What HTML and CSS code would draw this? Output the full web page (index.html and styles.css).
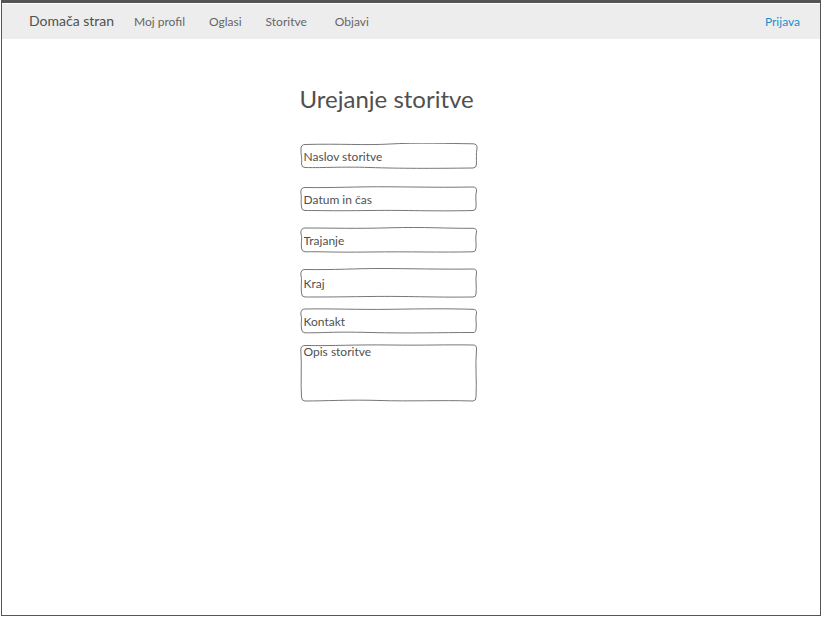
FILE: index.html
```html
<!DOCTYPE html>
<html lang="sl">
<head>
<meta charset="utf-8">
<meta name="viewport" content="width=device-width, initial-scale=1">
<title>Urejanje storitve</title>
<link rel="stylesheet" href="styles.css">
</head>
<body>
<div class="window">
  <header class="bar">
    <nav class="nav">
      <a class="brand" href="#">Domača stran</a>
      <a class="profile" href="#">Moj profil</a>
      <a class="ads" href="#">Oglasi</a>
      <a class="services" href="#">Storitve</a>
      <a href="#">Objavi</a>
    </nav>
    <a class="login" href="#">Prijava</a>
  </header>
  <main class="content">
    <form class="form">
      <h1>Urejanje storitve</h1>
      <div class="field roomy">
        <svg class="outline" viewBox="0 0 178 26" preserveAspectRatio="none" aria-hidden="true"><path d="M5 1.5C40 .5 65 2.5 90 1S150 .5 173 .8Q177.500 1 177 5C176 11 176.500 16 176.500 21Q176.500 25 173 25C130 25.500 100 25.500 70 24.500S25 25 5 24.500Q1.500 24.500 1.500 21C2.500 15 .5 11 1 6Q1 1.500 5 1.500Z"/></svg>
        <input type="text" aria-label="Naslov storitve" placeholder="Naslov storitve">
      </div>
      <div class="field">
        <svg class="outline" viewBox="0 0 178 26" preserveAspectRatio="none" aria-hidden="true"><path d="M5 1.500C35 2 55 .5 90 .8S145 1.500 173 1Q177 1 176.500 5C175 10 176.500 16 176 21Q176 24.500 173 24.500C130 25.500 110 24 70 24.500S25 24.500 5 24.500Q1.500 24.500 1.500 21C.5 15 2 11 .8 6Q.8 1.500 5 1.500Z"/></svg>
        <input type="text" aria-label="Datum in čas" placeholder="Datum in čas">
      </div>
      <div class="field">
        <svg class="outline" viewBox="0 0 178 26" preserveAspectRatio="none" aria-hidden="true"><path d="M5 1C35 1 55 1.800 90 .8S145 1.500 173 1.300Q177 1.500 176.500 5C175 10 176.500 16 176 21Q176 24.800 173 24.800C140 25.500 110 24.500 70 25S25 24.500 5 24.800Q1.500 24.500 1.500 21C.5 15 3 11 .8 6Q.8 1 5 1Z"/></svg>
        <input type="text" aria-label="Trajanje" placeholder="Trajanje">
      </div>
      <div class="field tall">
        <svg class="outline" viewBox="0 0 178 30" preserveAspectRatio="none" aria-hidden="true"><path d="M5 1.500C35 2 55 .5 80 .5S145 1.500 173 1Q177 1 176.500 5C175 12 177 18 176 26Q176 29 173 29C130 29.500 110 28 70 28.500S25 29 5 29Q1.500 29 1.500 25C.5 18 2.500 12 .8 6Q.8 1.500 5 1.500Z"/></svg>
        <input type="text" aria-label="Kraj" placeholder="Kraj">
      </div>
      <div class="field tight">
        <svg class="outline" viewBox="0 0 178 26" preserveAspectRatio="none" aria-hidden="true"><path d="M5 1C35 .5 55 1.800 90 1.300S145 .5 173 1.300Q177 1.500 176.500 5C175 10 177 16 176 21Q176 24.800 173 24.500C140 24.500 110 25.500 70 24.500S25 25 5 24.800Q1.500 24.500 1.500 21C.5 15 2.500 11 .8 6Q.8 1 5 1Z"/></svg>
        <input type="text" aria-label="Kontakt" placeholder="Kontakt">
      </div>
      <div class="field">
        <svg class="outline" viewBox="0 0 178 58" preserveAspectRatio="none" aria-hidden="true"><path d="M5 1.500C35 2 55 .5 90 1S145 .5 173 1Q177 1 176.500 5C175 22 177 38 176 53Q176 57 173 57C140 56 110 57.500 80 56.500S25 57 5 57Q1.500 57 1.500 53C.5 38 2 22 .8 6Q.8 1.500 5 1.500Z"/></svg>
        <textarea aria-label="Opis storitve" placeholder="Opis storitve"></textarea>
      </div>
    </form>
  </main>
</div>
</body>
</html>
```
FILE: styles.css
```css
* {
  box-sizing: border-box;
}

body {
  margin: 0;
  background: #fff;
  color: #505050;
  font-family: Lato, "Noto Sans", sans-serif;
  font-size: 12px;
}

.window {
  min-height: calc(100vh - 3px);
  margin: 0 2px 3px 1px;
  border: 1px solid #555;
  border-top: 3px solid #555;
}

.bar {
  display: flex;
  align-items: center;
  justify-content: space-between;
  height: 35px;
  margin-top: 1px;
  padding: 0 20px 0 27px;
  background: #ededed;
}

.nav {
  display: flex;
  align-items: baseline;
}

.bar a {
  color: #666;
  line-height: 20px;
  text-decoration: none;
}

.bar .brand {
  margin-right: 20px;
  color: #505050;
  font-size: 14px;
}

.profile,
.ads {
  margin-right: 24px;
}

.services {
  margin-right: 28px;
}

.bar .login {
  color: #1591d0;
}

.content {
  display: grid;
  grid-template-columns: 298fr 178px 343fr;
  padding: 44px 0;
}

.form {
  grid-column: 2;
}

h1 {
  margin: 0 0 28px;
  font-size: 24px;
  font-weight: 400;
  line-height: 32px;
  white-space: nowrap;
}

.field {
  position: relative;
  height: 26px;
  margin-bottom: 15px;
}

.roomy {
  margin-bottom: 17px;
}

.tall {
  height: 30px;
}

.tall,
.tight {
  margin-bottom: 10px;
}

.field:last-child {
  height: 58px;
  margin-bottom: 0;
}

.outline {
  position: absolute;
  inset: 0;
  width: 100%;
  height: 100%;
  fill: none;
  stroke: #777;
  pointer-events: none;
}

input,
textarea {
  display: block;
  width: 100%;
  height: 100%;
  margin: 0;
  padding: 0 4px;
  border: 0;
  outline: 0;
  background: transparent;
  color: #505050;
  font: inherit;
  line-height: 16px;
  resize: none;
}

::placeholder {
  color: #505050;
  opacity: 1;
}
```
